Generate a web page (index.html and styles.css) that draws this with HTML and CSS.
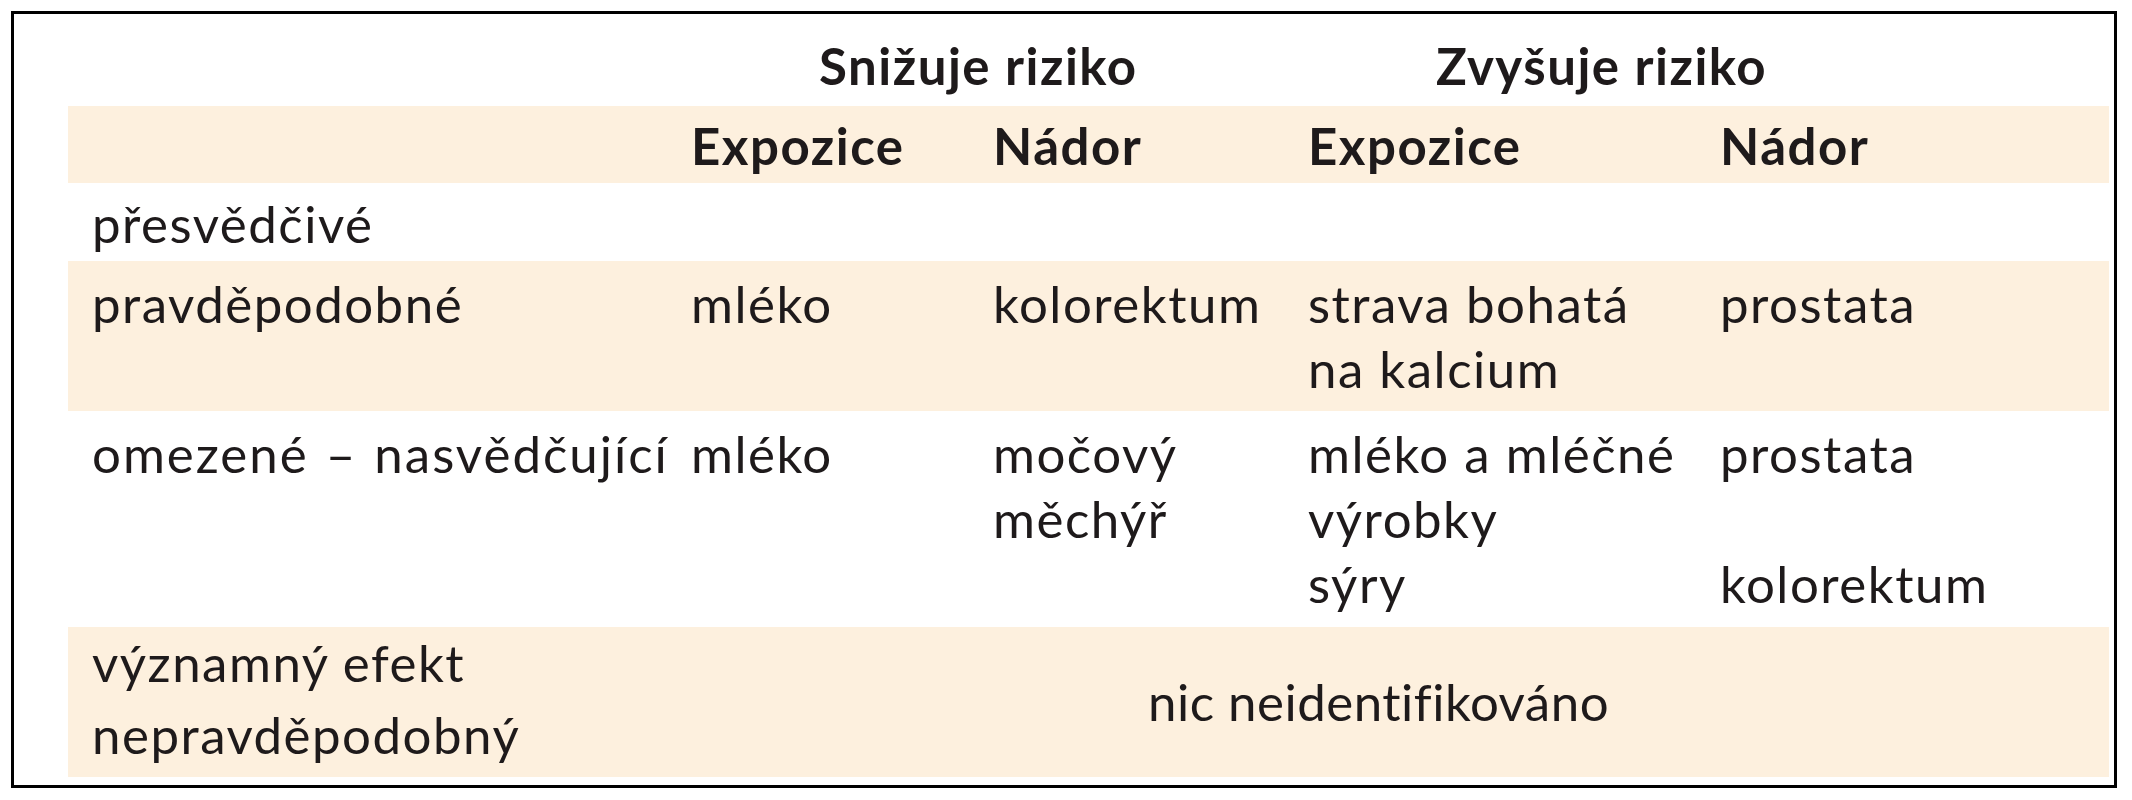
FILE: index.html
```html
<!DOCTYPE html>
<html lang="cs">
<head>
<meta charset="utf-8">
<title>Riziko</title>
<link rel="stylesheet" href="styles.css">
</head>
<body>
<div class="frame">
  <div class="row r1">
    <div class="cell"></div>
    <div class="cell head group span2">Snižuje riziko</div>
    <div class="cell head group span2">Zvyšuje riziko</div>
  </div>
  <div class="row r2 shade">
    <div class="cell"></div>
    <div class="cell head">Expozice</div>
    <div class="cell head">Nádor</div>
    <div class="cell head">Expozice</div>
    <div class="cell head">Nádor</div>
  </div>
  <div class="row r3">
    <div class="cell">přesvědčivé</div>
    <div class="cell"></div>
    <div class="cell"></div>
    <div class="cell"></div>
    <div class="cell"></div>
  </div>
  <div class="row r4 shade">
    <div class="cell">pravděpodobné</div>
    <div class="cell">mléko</div>
    <div class="cell">kolorektum</div>
    <div class="cell">strava bohatá<br>na kalcium</div>
    <div class="cell">prostata</div>
  </div>
  <div class="row r5">
    <div class="cell wide">omezené – nasvědčující</div>
    <div class="cell">mléko</div>
    <div class="cell">močový<br>měchýř</div>
    <div class="cell">mléko a mléčné<br>výrobky<br>sýry</div>
    <div class="cell">prostata<br><br>kolorektum</div>
  </div>
  <div class="row r6 shade">
    <div class="cell">významný efekt<br>nepravděpodobný</div>
    <div class="cell none span4">nic neidentifikováno</div>
  </div>
</div>
</body>
</html>
```

FILE: styles.css
```css
html, body {
  margin: 0;
  padding: 0;
  background: #ffffff;
}

body {
  font-family: Lato, "Open Sans", "Liberation Sans", sans-serif;
  font-size: 51px;
  letter-spacing: 1.5px;
  color: #1e1a1b;
}

.frame {
  margin: 11px 15px 12px 11px;
  border: 3px solid #000000;
  padding: 0 5px 0 54px;
  box-sizing: content-box;
  height: 771px;
}

.row {
  display: grid;
  grid-template-columns: 599px 302px 315px 412px 1fr;
  padding-left: 24px;
  line-height: 65px;
  box-sizing: border-box;
}

.shade {
  background: #fdf0de;
}

.cell {
  white-space: nowrap;
}

.wide {
  letter-spacing: 2px;
  word-spacing: 2px;
}

.head {
  font-weight: 700;
  letter-spacing: 1.5px;
}

.span2 {
  grid-column: span 2;
}

.span4 {
  grid-column: span 4;
}

.group {
  padding-left: 128px;
}

.r1 {
  height: 92px;
  padding-top: 19px;
}

.r2 {
  height: 77px;
  padding-top: 7px;
}

.r3 {
  height: 78px;
  padding-top: 8px;
}

.r4 {
  height: 150px;
  padding-top: 10px;
}

.r5 {
  height: 216px;
  padding-top: 10px;
}

.r6 {
  height: 150px;
  padding-top: 0;
  line-height: 72px;
}

.none {
  align-self: center;
  padding-left: 457px;
  letter-spacing: 0.5px;
}
```
